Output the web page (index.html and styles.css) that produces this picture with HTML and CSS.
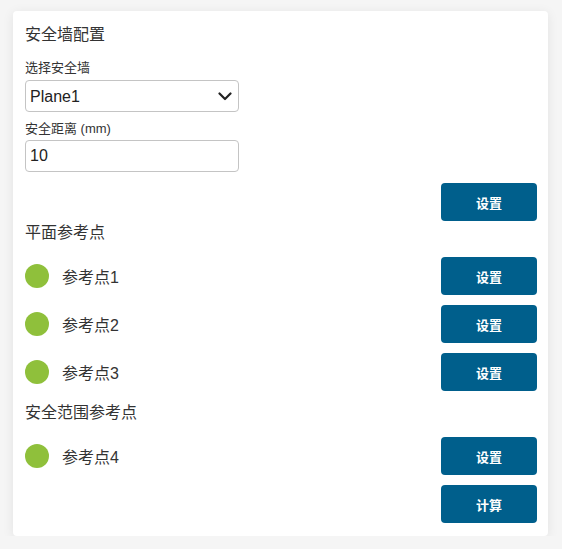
FILE: index.html
```html
<!DOCTYPE html>
<html lang="zh-CN">
<head>
<meta charset="utf-8">
<title>安全墙配置</title>
<link rel="stylesheet" href="styles.css">
</head>
<body>
<div class="card">
  <div class="title">安全墙配置</div>
  <label class="label">选择安全墙</label>
  <div class="select-wrap">
    <select class="field select">
      <option>Plane1</option>
    </select>
    <svg class="chev" width="14" height="9" viewBox="0 0 14 9"><path d="M1.5 1.5 L7 7 L12.5 1.5" fill="none" stroke="#222" stroke-width="2.2" stroke-linecap="round" stroke-linejoin="round"/></svg>
  </div>
  <label class="label label2">安全距离 (mm)</label>
  <input class="field input" type="text" value="10">
  <div class="actions first"><button class="btn">设置</button></div>

  <div class="section">平面参考点</div>
  <div class="rows">
    <div class="row"><span class="dot"></span><span class="name">参考点1</span><button class="btn">设置</button></div>
    <div class="row"><span class="dot"></span><span class="name">参考点2</span><button class="btn">设置</button></div>
    <div class="row"><span class="dot"></span><span class="name">参考点3</span><button class="btn">设置</button></div>
  </div>

  <div class="section section2">安全范围参考点</div>
  <div class="rows">
    <div class="row"><span class="dot"></span><span class="name">参考点4</span><button class="btn">设置</button></div>
    <div class="actions"><button class="btn">计算</button></div>
  </div>
</div>
</body>
</html>
```
FILE: styles.css
```css
html, body {
  margin: 0;
  padding: 0;
}
body {
  background: #f5f5f5;
  padding: 11px 14px 0 13px;
  font-family: "Liberation Sans", Arial, "Noto Sans CJK SC", sans-serif;
  color: #333;
}
.card {
  background: #fff;
  border-radius: 4px;
  box-shadow: 0 2px 12px rgba(0, 0, 0, 0.08);
  padding: 12px 11px 13px 12px;
  display: flex;
  flex-direction: column;
}
.title {
  font-size: 16px;
  line-height: 24px;
  margin-bottom: 12px;
}
.label {
  display: block;
  font-size: 13px;
  line-height: 18px;
  margin-bottom: 3px;
}
.label2 {
  margin-top: 8px;
  margin-bottom: 2px;
}
.select-wrap {
  position: relative;
  width: 214px;
}
.field {
  box-sizing: border-box;
  width: 214px;
  height: 32px;
  border: 1px solid #c4c4c4;
  border-radius: 4px;
  background: #fff;
  font-family: "Liberation Sans", Arial, sans-serif;
  font-size: 16px;
  color: #222;
  padding: 0 4px;
  margin: 0;
  outline: none;
}
.select {
  appearance: none;
  -webkit-appearance: none;
  display: block;
}
.chev {
  position: absolute;
  right: 7px;
  top: 12px;
  pointer-events: none;
}
.input {
  display: block;
}
.actions {
  display: flex;
  justify-content: flex-end;
}
.actions.first {
  margin-top: 11px;
}
.btn {
  width: 96px;
  height: 38px;
  border: none;
  border-radius: 4px;
  background: #005f8c;
  color: #fff;
  font-family: "Noto Sans CJK SC", sans-serif;
  font-weight: bold;
  font-size: 13px;
  padding: 0;
  cursor: pointer;
}
.section {
  font-size: 16px;
  line-height: 24px;
  margin-bottom: 12px;
}
.section2 {
  margin-top: 10px;
}
.rows {
  display: flex;
  flex-direction: column;
  gap: 10px;
}
.row {
  display: flex;
  align-items: center;
}
.row .btn {
  margin-left: auto;
}
.dot {
  width: 24px;
  height: 24px;
  border-radius: 50%;
  background: #8fc03b;
  flex: none;
}
.name {
  margin-left: 13px;
  font-size: 16px;
  color: #333;
}
```
